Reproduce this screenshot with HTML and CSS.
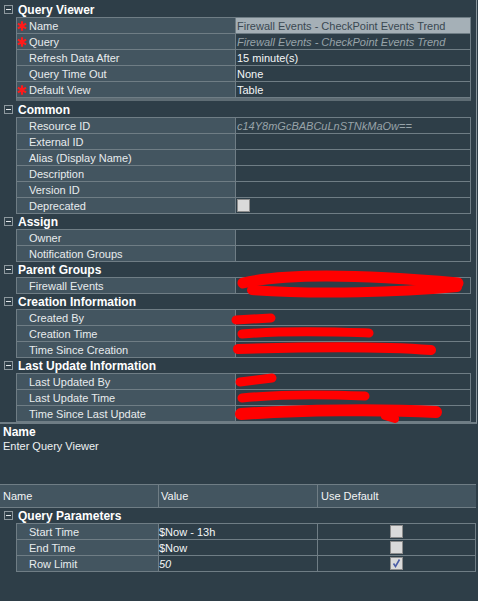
FILE: index.html
```html
<!DOCTYPE html>
<html>
<head>
<meta charset="utf-8">
<link rel="stylesheet" href="styles.css">
</head>
<body>
<div class="page">
  <div class="top">
    <div class="group first">
      <div class="ghead"><span class="minus"></span>Query Viewer</div>
      <div class="grid thick">
        <div class="row"><div class="lab"><span class="mark"><svg width="10" height="10" viewBox="0 0 10 10"><path d="M5 0.3V9.7M0.9 2.6L9.1 7.4M0.9 7.4L9.1 2.6" stroke="#ff1a1a" stroke-width="2.2"/></svg></span>Name</div><div class="val sel">Firewall Events - CheckPoint Events Trend</div></div>
        <div class="row"><div class="lab"><span class="mark"><svg width="10" height="10" viewBox="0 0 10 10"><path d="M5 0.3V9.7M0.9 2.6L9.1 7.4M0.9 7.4L9.1 2.6" stroke="#ff1a1a" stroke-width="2.2"/></svg></span>Query</div><div class="val dim">Firewall Events - CheckPoint Events Trend</div></div>
        <div class="row"><div class="lab"><span class="mark"></span>Refresh Data After</div><div class="val">15 minute(s)</div></div>
        <div class="row"><div class="lab"><span class="mark"></span>Query Time Out</div><div class="val">None</div></div>
        <div class="row"><div class="lab"><span class="mark"><svg width="10" height="10" viewBox="0 0 10 10"><path d="M5 0.3V9.7M0.9 2.6L9.1 7.4M0.9 7.4L9.1 2.6" stroke="#ff1a1a" stroke-width="2.2"/></svg></span>Default View</div><div class="val">Table</div></div>
      </div>
    </div>
    <div class="group">
      <div class="ghead"><span class="minus"></span>Common</div>
      <div class="grid">
        <div class="row"><div class="lab"><span class="mark"></span>Resource ID</div><div class="val dim">c14Y8mGcBABCuLnSTNkMaOw==</div></div>
        <div class="row"><div class="lab"><span class="mark"></span>External ID</div><div class="val"></div></div>
        <div class="row"><div class="lab"><span class="mark"></span>Alias (Display Name)</div><div class="val"></div></div>
        <div class="row"><div class="lab"><span class="mark"></span>Description</div><div class="val"></div></div>
        <div class="row"><div class="lab"><span class="mark"></span>Version ID</div><div class="val"></div></div>
        <div class="row"><div class="lab"><span class="mark"></span>Deprecated</div><div class="val"><span class="cb"></span></div></div>
      </div>
    </div>
    <div class="group">
      <div class="ghead"><span class="minus"></span>Assign</div>
      <div class="grid">
        <div class="row"><div class="lab"><span class="mark"></span>Owner</div><div class="val"></div></div>
        <div class="row"><div class="lab"><span class="mark"></span>Notification Groups</div><div class="val"></div></div>
      </div>
    </div>
    <div class="group">
      <div class="ghead"><span class="minus"></span>Parent Groups</div>
      <div class="grid">
        <div class="row"><div class="lab"><span class="mark"></span>Firewall Events</div><div class="val"></div></div>
      </div>
    </div>
    <div class="group">
      <div class="ghead"><span class="minus"></span>Creation Information</div>
      <div class="grid">
        <div class="row"><div class="lab"><span class="mark"></span>Created By</div><div class="val"></div></div>
        <div class="row"><div class="lab"><span class="mark"></span>Creation Time</div><div class="val"></div></div>
        <div class="row"><div class="lab"><span class="mark"></span>Time Since Creation</div><div class="val"></div></div>
      </div>
    </div>
    <div class="group">
      <div class="ghead"><span class="minus"></span>Last Update Information</div>
      <div class="grid">
        <div class="row"><div class="lab"><span class="mark"></span>Last Updated By</div><div class="val"></div></div>
        <div class="row"><div class="lab"><span class="mark"></span>Last Update Time</div><div class="val"></div></div>
        <div class="row"><div class="lab"><span class="mark"></span>Time Since Last Update</div><div class="val"></div></div>
      </div>
    </div>
  </div>
  <div class="desc">
    <div class="desc-title">Name</div>
    <div class="desc-text">Enter Query Viewer</div>
  </div>
  <div class="params">
    <div class="phead">
      <div class="pc c1">Name</div>
      <div class="pc c2">Value</div>
      <div class="pc c3">Use Default</div>
    </div>
    <div class="ghead"><span class="minus"></span>Query Parameters</div>
    <div class="pgrid">
      <div class="prow"><div class="plab">Start Time</div><div class="pval">$Now - 13h</div><div class="pdef"><span class="cb"></span></div></div>
      <div class="prow"><div class="plab">End Time</div><div class="pval">$Now</div><div class="pdef"><span class="cb"></span></div></div>
      <div class="prow"><div class="plab">Row Limit</div><div class="pval dim">50</div><div class="pdef"><span class="cb"><svg width="11" height="11" viewBox="0 0 11 11"><path d="M2.5 5.5L4.5 8.5L8.5 1.5" fill="none" stroke="#4b5da6" stroke-width="1.6"/></svg></span></div></div>
    </div>
  </div>
  <svg class="redact" width="478" height="601" viewBox="0 0 478 601">
    <g fill="none" stroke="#ff0000" stroke-linecap="round">
      <path d="M243 283 C 290 272, 380 276, 458 283" stroke-width="11"/>
      <path d="M252 290 C 320 295, 400 292, 457 287" stroke-width="10"/>
      <path d="M236 320 L 271 318" stroke-width="9"/>
      <path d="M242 334 C 290 330, 340 332, 369 333" stroke-width="9"/>
      <path d="M238 349 C 300 347, 380 346, 431 350" stroke-width="10"/>
      <path d="M240 382 L 272 378" stroke-width="9"/>
      <path d="M242 398 C 290 393, 340 395, 365 396" stroke-width="9"/>
      <path d="M241 414 C 300 410, 380 409, 436 412" stroke-width="12"/>
      <path d="M385 416 L 395 419" stroke-width="8"/>
    </g>
  </svg>
</div>
</body>
</html>
```

FILE: styles.css
```css
html, body {
  margin: 0;
  padding: 0;
  background: #2e3e48;
}
body {
  font-family: "Liberation Sans", Arial, sans-serif;
  font-size: 11px;
  color: #eef1f2;
}
.page {
  position: relative;
  width: 478px;
  height: 601px;
  overflow: hidden;
}
.top {
  width: 477px;
  padding-top: 2px;
  box-sizing: border-box;
  border-right: 1px solid #8a969d;
  border-bottom: 2px solid #6f7d85;
}
.ghead {
  height: 15px;
  display: flex;
  align-items: center;
  font-weight: bold;
  font-size: 12px;
  color: #ffffff;
}
.first {
  margin-bottom: 1px;
}
.minus {
  width: 9px;
  height: 9px;
  box-sizing: border-box;
  border: 1px solid #8d989e;
  margin: 0 5px 0 4px;
  display: flex;
  align-items: center;
  justify-content: center;
}
.minus::before {
  content: "";
  width: 5px;
  height: 1px;
  background: #e6e9eb;
}
.grid {
  margin-left: 16px;
  width: 455px;
  box-sizing: border-box;
  border: 1px solid #6f7d85;
  border-bottom: none;
}
.grid.thick {
  border-bottom: 3px solid #5e6c74;
}
.row {
  display: grid;
  grid-template-columns: 219px 1fr;
  height: 16px;
  box-sizing: border-box;
  border-bottom: 1px solid #6f7d85;
}
.lab {
  background: #435560;
  border-right: 1px solid #6f7d85;
  display: flex;
  align-items: center;
  white-space: nowrap;
  color: #e8ecee;
}
.mark {
  width: 12px;
  flex: none;
  display: flex;
  align-items: center;
}
.mark svg { display: block; }
.val {
  display: flex;
  align-items: center;
  padding-left: 1px;
  white-space: nowrap;
  overflow: hidden;
  color: #f4f6f7;
}
.val.sel {
  background: #a5b0b7;
  color: #3a4852;
}
.dim {
  color: #98a3a9;
  font-style: italic;
}
.cb {
  width: 13px;
  height: 13px;
  box-sizing: border-box;
  background: #dadada;
  border: 1px solid #8c8c8c;
  display: flex;
  align-items: center;
  justify-content: center;
}
.cb svg { display: block; }
.desc {
  height: 60px;
  box-sizing: border-box;
  padding: 1px 3px;
}
.desc-title {
  font-weight: bold;
  font-size: 12px;
  color: #ffffff;
  line-height: 14px;
}
.desc-text {
  line-height: 14px;
  color: #eef1f2;
}
.params {
  width: 476px;
}
.phead {
  display: grid;
  grid-template-columns: 159px 159px 1fr;
  height: 24px;
  box-sizing: border-box;
  border-top: 1px solid #6f7d85;
  border-bottom: 1px solid #6f7d85;
  background: #435560;
}
.pc {
  display: flex;
  align-items: center;
  padding-left: 3px;
  color: #f2f4f5;
}
.c1, .c2 {
  border-right: 1px solid #6f7d85;
}
.c2 { padding-left: 2px; }
.pgrid {
  margin-left: 16px;
  width: 460px;
  box-sizing: border-box;
  border: 1px solid #6f7d85;
  border-bottom: none;
}
.prow {
  display: grid;
  grid-template-columns: 142px 159px 1fr;
  height: 16px;
  box-sizing: border-box;
  border-bottom: 1px solid #6f7d85;
}
.plab {
  background: #435560;
  border-right: 1px solid #6f7d85;
  display: flex;
  align-items: center;
  padding-left: 12px;
  color: #e8ecee;
}
.pval {
  border-right: 1px solid #6f7d85;
  display: flex;
  align-items: center;
  color: #f4f6f7;
}
.pdef {
  display: flex;
  align-items: center;
  justify-content: center;
}
.redact {
  position: absolute;
  left: 0;
  top: 0;
  pointer-events: none;
}
```
